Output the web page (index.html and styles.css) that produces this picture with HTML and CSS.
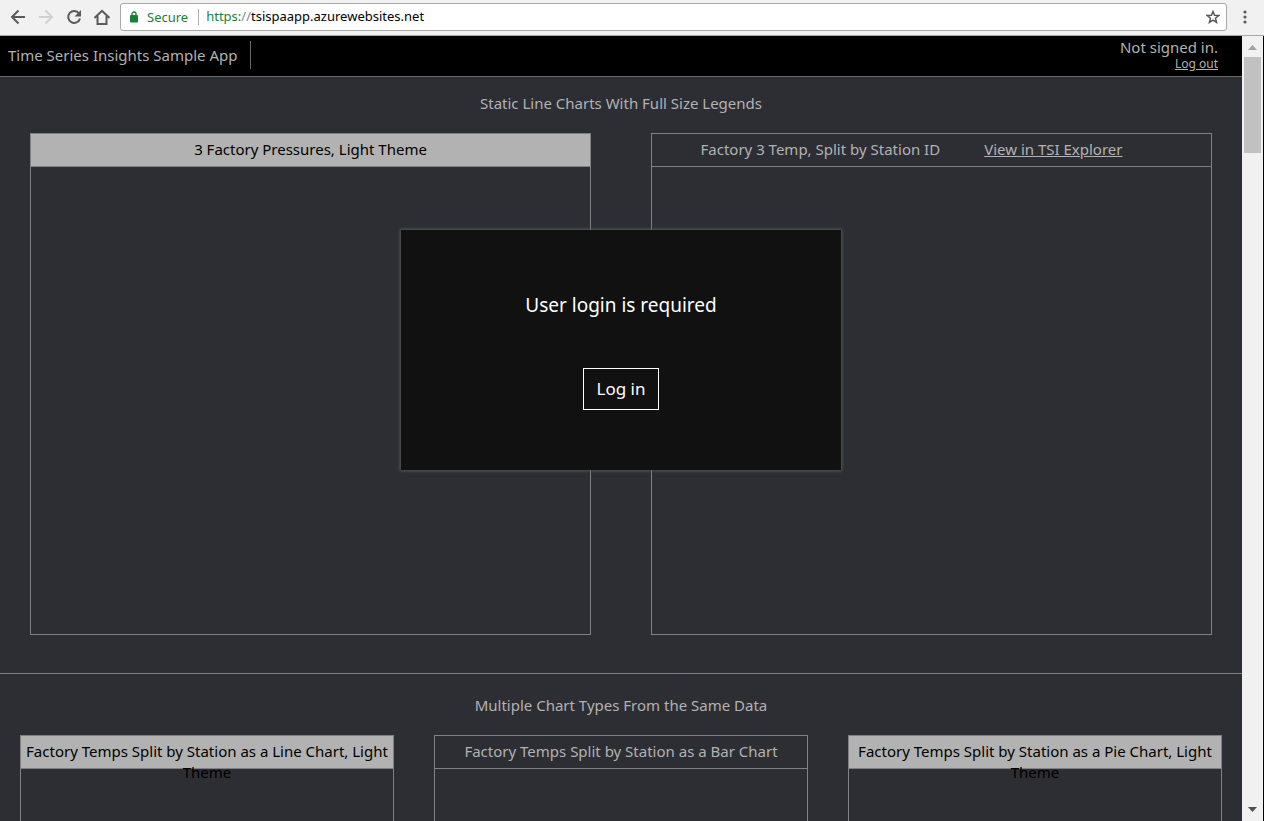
FILE: index.html
```html
<!DOCTYPE html>
<html lang="en">
<head>
<meta charset="utf-8">
<title>Time Series Insights Sample App</title>
<link rel="stylesheet" href="styles.css">
</head>
<body>
<div class="window">
  <div class="toolbar">
    <nav class="nav">
      <button class="icon-btn" aria-label="Back"><svg width="16" height="16" viewBox="0 0 16 16" fill="none" stroke="#5a5a5a" stroke-width="2"><path d="M15 8H2.5M8.5 1.5L2 8l6.500 6.500"/></svg></button>
      <button class="icon-btn" aria-label="Forward" disabled><svg width="16" height="16" viewBox="0 0 16 16" fill="none" stroke="#d0d0d0" stroke-width="2"><path d="M1 8h12.500M7.500 1.500L14 8l-6.500 6.500"/></svg></button>
      <button class="icon-btn" aria-label="Reload"><svg width="16" height="16" viewBox="0 0 16 16"><path d="M13.200 4.600A6 6 0 1 0 14 9.500" fill="none" stroke="#5a5a5a" stroke-width="2"/><path d="M15 1v6.500H8.500z" fill="#5a5a5a"/></svg></button>
      <button class="icon-btn" aria-label="Home"><svg width="16" height="16" viewBox="0 0 16 16" fill="none" stroke="#5a5a5a" stroke-width="2"><path d="M.5 9L8 1.800 15.500 9M3.500 7v8h9V7"/></svg></button>
    </nav>
    <div class="address">
      <svg class="lock" width="8" height="12" viewBox="0 0 8 12"><path d="M2 5V3a2 2 0 0 1 4 0v2" fill="none" stroke="#188038" stroke-width="1.300"/><rect y="4" width="8" height="7.500" rx="1" fill="#188038"/></svg>
      <span class="secure">Secure</span>
      <span class="url"><span class="scheme">https:</span><span class="slashes">//</span>tsispaapp.azurewebsites.net</span>
      <button class="icon-btn star" aria-label="Bookmark"><svg width="14" height="14" viewBox="0 0 14 14" fill="none" stroke="#555" stroke-width="1.400"><path d="M7 1.500l1.500 3.800 4.300.2-3.300 2.700 1.100 4.200L7 10.100l-3.600 2.300 1.100-4.200L1.200 5.500l4.300-.2z"/></svg></button>
    </div>
    <button class="icon-btn more" aria-label="Menu"><svg width="4" height="14" viewBox="0 0 4 14" fill="#5a5a5a"><circle cx="2" cy="2" r="1.600"/><circle cx="2" cy="7" r="1.600"/><circle cx="2" cy="12" r="1.600"/></svg></button>
  </div>
  <div class="view">
    <main class="page">
      <header class="app-header">
        <h1 class="app-name">Time Series Insights Sample App</h1>
        <div class="account">
          <span class="status">Not signed in.</span>
          <a class="logout" href="#">Log out</a>
        </div>
      </header>
      <section class="row row-two">
        <h2 class="row-title">Static Line Charts With Full Size Legends</h2>
        <div class="charts">
          <article class="chart"><h3 class="chart-title light">3 Factory Pressures, Light Theme</h3></article>
          <article class="chart"><h3 class="chart-title with-link"><span>Factory 3 Temp, Split by Station ID</span><a href="#">View in TSI Explorer</a></h3></article>
        </div>
      </section>
      <section class="row row-three">
        <h2 class="row-title">Multiple Chart Types From the Same Data</h2>
        <div class="charts">
          <article class="chart"><h3 class="chart-title light">Factory Temps Split by Station as a Line Chart, Light Theme</h3></article>
          <article class="chart"><h3 class="chart-title">Factory Temps Split by Station as a Bar Chart</h3></article>
          <article class="chart"><h3 class="chart-title light">Factory Temps Split by Station as a Pie Chart, Light Theme</h3></article>
        </div>
      </section>
      <div class="login" role="dialog" aria-labelledby="login-text">
        <p class="login-text" id="login-text">User login is required</p>
        <button class="login-btn">Log in</button>
      </div>
    </main>
    <div class="scrollbar">
      <svg width="9" height="5" viewBox="0 0 9 5"><path d="M0 5l4.500-5L9 5z" fill="#a3a3a3"/></svg>
      <div class="thumb"></div>
      <svg class="down" width="9" height="5" viewBox="0 0 9 5"><path d="M0 0l4.500 5L9 0z" fill="#505050"/></svg>
    </div>
  </div>
</div>
</body>
</html>
```
FILE: styles.css
```css
* { box-sizing: border-box; }
body {
  margin: 0;
  font-family: "Noto Sans", "Open Sans", sans-serif;
  font-size: 15px;
  line-height: 21px;
  color: #b2b2b2;
}
h1, h2, h3, p { margin: 0; font-size: inherit; font-weight: 400; }
a { color: inherit; }
.window { height: 100vh; display: flex; flex-direction: column; overflow: hidden; }

.toolbar {
  flex: none;
  height: 36px;
  display: flex;
  align-items: center;
  padding: 0 17px 2px 10px;
  background: #f1f1f1;
  border-bottom: 1px solid #a9a9a9;
}
.nav { display: flex; gap: 12px; margin-right: 10px; }
.icon-btn { display: flex; padding: 0; border: 0; background: none; }
.address {
  flex: 1;
  height: 28px;
  display: flex;
  align-items: center;
  padding: 0 6px 0 9px;
  background: #fff;
  border: 1px solid #a9a9a9;
  border-radius: 3px;
  font-size: 13px;
}
.secure {
  margin-left: 9px;
  padding-right: 10px;
  line-height: 16px;
  color: #188038;
  border-right: 1px solid #b0b0b0;
}
.url { margin-left: 7px; color: #000; }
.scheme { color: #188038; }
.slashes { color: #888; }
.star { margin-left: auto; }
.more { margin-left: 16px; }

.view { flex: 1; min-height: 0; display: flex; border-right: 1px solid #000; }
.page { position: relative; flex: 1; overflow: hidden; background: #2d2e33; }
.app-header {
  height: 41px;
  display: flex;
  align-items: center;
  justify-content: space-between;
  padding: 0 24px 2px 8px;
  background: #000;
  border-bottom: 1px solid #6a6a6a;
}
.app-name { padding-right: 13px; line-height: 28px; border-right: 1px solid #6a6a6a; }
.account { display: flex; flex-direction: column; align-items: flex-end; }
.status { line-height: 18px; }
.logout { font-size: 12px; line-height: 16px; }

.row { border-bottom: 1px solid #818183; text-align: center; }
.row-title { padding: 16px 0 19px; }
.row-two { padding-bottom: 38px; }
.row-three { padding-top: 5px; }
.charts { display: grid; }
.row-two .charts { grid-template-columns: 1fr 1fr; gap: 60px; padding: 0 30px; }
.row-three .charts { grid-template-columns: 1fr 1fr 1fr; gap: 40px; padding: 0 20px; }
.chart { height: 502px; border: 1px solid #818183; }
.chart-title { height: 33px; padding: 5px 4px 0; border-bottom: 1px solid #818183; }
.light { background: #b2b2b2; color: #000; }
.with-link { display: flex; justify-content: center; gap: 44px; padding-right: 44px; }

.login {
  position: absolute;
  top: 194px;
  left: 50%;
  width: 440px;
  height: 240px;
  transform: translateX(-50%);
  display: flex;
  flex-direction: column;
  align-items: center;
  padding-top: 62px;
  background: #111;
  box-shadow: 0 0 3px 1px #5a5a5a;
  color: #fff;
}
.login-text { font-size: 19px; line-height: 26px; }
.login-btn {
  margin-top: 50px;
  padding: 0 13px;
  border: 1px solid #fff;
  background: none;
  color: #fff;
  font: 17px/40px "Noto Sans", "Open Sans", sans-serif;
}

.scrollbar {
  width: 21px;
  display: flex;
  flex-direction: column;
  align-items: center;
  padding: 9px 0 9px;
  background: #f1f1f1;
}
.thumb { width: 17px; height: 96px; margin-top: 7px; background: #c1c1c1; }
.down { margin-top: auto; }
```
